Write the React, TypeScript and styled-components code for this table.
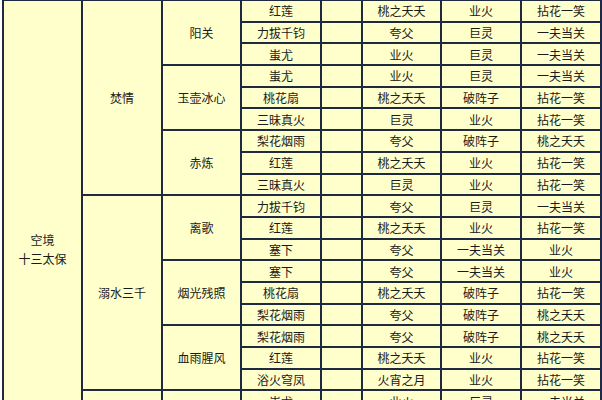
import React from "react";
import styled, { createGlobalStyle } from "styled-components";

interface IRow {
  skill: string;
  a: string;
  b: string;
  c: string;
}

interface IGroup {
  name: string;
  rows: Array<IRow>;
}

interface ISection {
  name: string;
  groups: Array<IGroup>;
}

const r = (skill: string, a: string, b: string, c: string): IRow => ({ skill, a, b, c });
const blank = () => r("", "", "", "");

const sections: Array<ISection> = [
  {
    name: "焚情",
    groups: [
      {
        name: "阳关",
        rows: [
          r("红莲", "桃之夭夭", "业火", "拈花一笑"),
          r("力拔千钧", "夸父", "巨灵", "一夫当关"),
          r("蚩尤", "业火", "巨灵", "一夫当关")
        ]
      },
      {
        name: "玉壶冰心",
        rows: [
          r("蚩尤", "业火", "巨灵", "一夫当关"),
          r("桃花扇", "桃之夭夭", "破阵子", "拈花一笑"),
          r("三昧真火", "巨灵", "业火", "拈花一笑")
        ]
      },
      {
        name: "赤炼",
        rows: [
          r("梨花烟雨", "夸父", "破阵子", "桃之夭夭"),
          r("红莲", "桃之夭夭", "业火", "拈花一笑"),
          r("三昧真火", "巨灵", "业火", "拈花一笑")
        ]
      }
    ]
  },
  {
    name: "溺水三千",
    groups: [
      {
        name: "离歌",
        rows: [
          r("力拔千钧", "夸父", "巨灵", "一夫当关"),
          r("红莲", "桃之夭夭", "业火", "拈花一笑"),
          r("塞下", "夸父", "一夫当关", "业火")
        ]
      },
      {
        name: "烟光残照",
        rows: [
          r("塞下", "夸父", "一夫当关", "业火"),
          r("桃花扇", "桃之夭夭", "破阵子", "拈花一笑"),
          r("梨花烟雨", "夸父", "破阵子", "桃之夭夭")
        ]
      },
      {
        name: "血雨腥风",
        rows: [
          r("梨花烟雨", "夸父", "破阵子", "桃之夭夭"),
          r("红莲", "桃之夭夭", "业火", "拈花一笑"),
          r("浴火穹凤", "火宵之月", "业火", "拈花一笑")
        ]
      }
    ]
  },
  {
    name: "",
    groups: [
      {
        name: "",
        rows: [r("蚩尤", "业火", "巨灵", "一夫当关"), blank(), blank()]
      },
      {
        name: "",
        rows: [blank(), blank(), blank()]
      }
    ]
  }
];

const colWidths = [79, 80, 79, 80, 41, 79, 80, 80];

const App = () => {
  const totalRows = sections.reduce((n, s) => n + s.groups.reduce((m, g) => m + g.rows.length, 0), 0);
  const trs: Array<React.ReactNode> = [];
  let first = true;
  sections.forEach((s, si) => {
    const sectionSpan = s.groups.reduce((n, g) => n + g.rows.length, 0);
    s.groups.forEach((g, gi) => {
      g.rows.forEach((row, ri) => {
        trs.push(
          <Row key={`${si}-${gi}-${ri}`}>
            {first && (
              <Cell rowSpan={23}>
                空境
                <br />
                十三太保
              </Cell>
            )}
            {!first && trs.length === 23 && <Cell rowSpan={totalRows - 23} />}
            {gi === 0 && ri === 0 && <Cell rowSpan={sectionSpan}>{s.name}</Cell>}
            {ri === 0 && <Cell rowSpan={g.rows.length}>{g.name}</Cell>}
            <Cell>{row.skill}</Cell>
            <Cell />
            <Cell>{row.a}</Cell>
            <Cell>{row.b}</Cell>
            <Cell>{row.c}</Cell>
          </Row>
        );
        first = false;
      });
    });
  });

  return (
    <>
      <GlobalStyle />
      <Page>
        <Table>
          <colgroup>
            {colWidths.map((w, i) => (
              <col key={i.toString()} style={{ width: w }} />
            ))}
          </colgroup>
          <tbody>{trs}</tbody>
        </Table>
      </Page>
    </>
  );
};

const GlobalStyle = createGlobalStyle`
  html, body {
    margin: 0;
    padding: 0;
    background: #ffffff;
  }
`;

const Page = styled.div`
  width: 602px;
  height: 400px;
  overflow: hidden;
  background: #ffffff;
`;

const Table = styled.table`
  table-layout: fixed;
  border-collapse: collapse;
  width: 598px;
  margin: -1px 0 0 2px;
  background: #ffffcc;
  font-family: "Noto Sans CJK SC", "Noto Sans", sans-serif;
  font-size: 12px;
  color: #1a1a1a;
`;

const Row = styled.tr`
  height: 21.7px;
`;

const Cell = styled.td`
  border: 2px solid #1e2a42;
  padding: 0;
  text-align: center;
  vertical-align: middle;
  line-height: 19px;
  white-space: nowrap;
  overflow: hidden;
`;

export default App;
